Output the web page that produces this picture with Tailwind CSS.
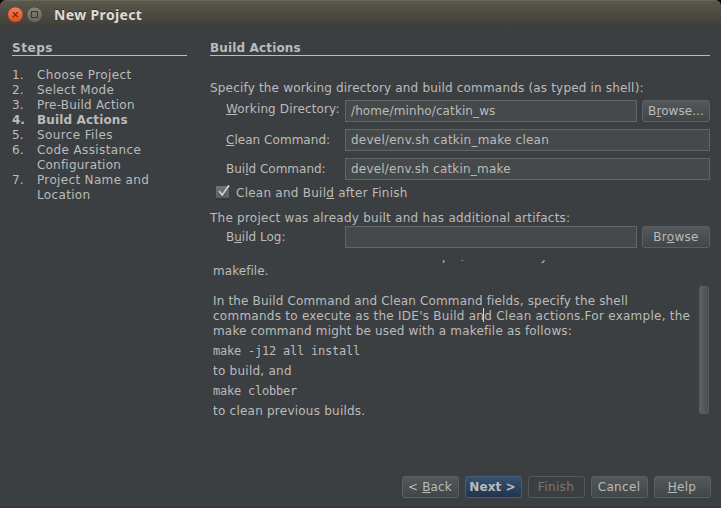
<!DOCTYPE html>
<html lang="en">
<head>
<meta charset="utf-8">
<title>New Project</title>
<script src="https://cdn.jsdelivr.net/npm/@tailwindcss/browser@4"></script>
</head>
<body class="w-[721px] h-[508px] overflow-hidden bg-black">
<div class="w-[721px] h-[508px] flex flex-col rounded-t-[6px] overflow-hidden bg-[#3c3f41] border-b-2 border-[#3b373b] text-[#bbbbbb] text-[12px] leading-[15px] font-['DejaVu_Sans',sans-serif] whitespace-nowrap [&_u]:underline-offset-[1px] [&_u]:decoration-1">

  <header class="h-7 shrink-0 flex items-center bg-linear-to-b from-[#5a574c] to-[#3e3d38] border-t border-[#69665a] pl-[7px]">
    <svg class="w-4 h-4 shrink-0" viewBox="0 0 16 16">
      <defs><linearGradient id="r" x1="0" y1="0" x2="0" y2="1"><stop offset="0" stop-color="#f5825c"/><stop offset="1" stop-color="#df4b16"/></linearGradient></defs>
      <circle cx="8.3" cy="7.700" r="7.700" fill="url(#r)" stroke="#37342d" stroke-width=".5"/>
      <path d="M5.900 5.100l5 5M10.900 5.100l-5 5" stroke="#5a2a18" stroke-width="1.3"/>
    </svg>
    <svg class="w-4 h-4 shrink-0 ml-[3px]" viewBox="0 0 16 16">
      <defs><linearGradient id="g" x1="0" y1="0" x2="0" y2="1"><stop offset="0" stop-color="#89867b"/><stop offset="1" stop-color="#65635b"/></linearGradient></defs>
      <circle cx="8.5" cy="7.700" r="7.700" fill="url(#g)" stroke="#37342d" stroke-width=".5"/>
      <path d="M5.500 4.500h6v6h-6z" fill="none" stroke="#3b3932" stroke-width="1.100"/>
    </svg>
    <h1 class="ml-[12px] font-['Noto_Sans',sans-serif] font-bold text-[14px] leading-5 tracking-[.36px] text-[#dfdbd2] [text-shadow:0_-1px_0_#33312b]">New Project</h1>
  </header>

  <main class="flex pl-3 pt-3 h-[448px] shrink-0">
    <aside class="w-[175px] mr-[23px]">
      <h2 class="font-bold tracking-[.54px] h-4 pt-px border-b border-[#bbbbbb]">Steps</h2>
      <ol class="mt-[12px] grid grid-cols-[25px_1fr]">
        <li class="contents"><span>1.</span><span class="tracking-[.38px]">Choose Project</span></li>
        <li class="contents"><span>2.</span><span class="tracking-[.34px]">Select Mode</span></li>
        <li class="contents"><span>3.</span><span class="tracking-[.2px]">Pre-Build Action</span></li>
        <li class="contents"><span class="font-bold">4.</span><span class="font-bold tracking-[.15px]">Build Actions</span></li>
        <li class="contents"><span>5.</span><span class="tracking-[.38px]">Source Files</span></li>
        <li class="contents"><span>6.</span><span class="tracking-[.38px]">Code Assistance<br><span class="tracking-[.2px]">Configuration</span></span></li>
        <li class="contents"><span>7.</span><span class="tracking-[.34px]">Project Name and<br>Location</span></li>
      </ol>
    </aside>

    <section class="w-[500px]">
      <h2 class="font-bold tracking-[.15px] h-4 pt-px border-b border-[#bbbbbb]">Build Actions</h2>
      <p class="mt-[25px] tracking-[.18px]">Specify the working directory and build commands (as typed in shell):</p>

      <div class="mt-1 flex h-[22px]">
        <label class="w-[135px] pl-4 pt-[2px] tracking-[.13px]"><u>W</u>orking Directory:</label>
        <div class="w-[292px] bg-[#45494a] border border-[#646464] pl-[5px] pt-[3px] tracking-[.1px]">/home/minho/catkin_ws</div>
        <button class="ml-[5px] w-[68px] rounded-[3px] border border-[#5b5f61] bg-linear-to-b from-[#53585a] to-[#414648] tracking-[.07px]">B<u>r</u>owse...</button>
      </div>
      <div class="mt-[7px] flex h-[22px]">
        <label class="w-[135px] pl-4 pt-1 tracking-[.04px]"><u>C</u>lean Command:</label>
        <div class="w-[365px] bg-[#45494a] border border-[#646464] pl-[5px] pt-[3px] tracking-[.23px]">devel/env.sh catkin_make clean</div>
      </div>
      <div class="mt-[7px] flex h-[22px]">
        <label class="w-[135px] pl-4 pt-1">Bui<u>l</u>d Command:</label>
        <div class="w-[365px] bg-[#45494a] border border-[#646464] pl-[5px] pt-[3px] tracking-[.2px]">devel/env.sh catkin_make</div>
      </div>

      <label class="mt-[5px] flex pl-[5px] h-[15px]">
        <svg class="w-[17px] h-[15px] shrink-0" viewBox="0 0 17 15">
          <defs><linearGradient id="c" x1="0" y1="0" x2="0" y2="1"><stop offset="0" stop-color="#737373"/><stop offset="1" stop-color="#5c5c5c"/></linearGradient></defs>
          <rect x="1" y="1" width="13" height="12.500" rx="1" fill="url(#c)"/>
          <path d="M1 14h13" stroke="#292b2c"/>
          <path d="M4 7.200l3.200 4L14 1.500" fill="none" stroke="#333" stroke-width="2"/>
          <path d="M4 6.200l3.200 4L14 .5" fill="none" stroke="#cccccc" stroke-width="2"/>
        </svg>
        <span class="ml-[4px] mt-px tracking-[.25px]">Clean and Buil<u>d</u> after Finish</span>
      </label>

      <p class="mt-[11px] tracking-[.24px]">The project was already built and has additional artifacts:</p>
      <div class="flex h-[22px]">
        <label class="w-[135px] pl-4 pt-1">B<u>u</u>ild Log:</label>
        <div class="w-[292px] bg-[#45494a] border border-[#646464]"></div>
        <button class="ml-[5px] w-[68px] rounded-[3px] border border-[#5b5f61] bg-linear-to-b from-[#53585a] to-[#414648] tracking-[.33px]">Br<u>o</u>wse</button>
      </div>

      <div class="mt-[12px] h-[160px] flex overflow-hidden">
        <article class="w-[489px] pl-[3px] -mt-[11px] h-[170px] [clip-path:inset(11px_0_0_0)]">
          <p class="pl-[195px] tracking-[.15px]">example, the directory that contains the</p>
          <p class="tracking-[.06px]">makefile.</p>
          <p class="mt-[15px] tracking-[.155px]">In the Build Command and Clean Command fields, specify the shell</p>
          <p class="tracking-[.255px]">commands to execute as the IDE's Build an<i class="inline-block w-px h-[14px] -ml-px bg-[#dddddd] align-[2px] -my-1"></i>d Clean actions.For example, the</p>
          <p class="tracking-[.18px]">make command might be used with a makefile as follows:</p>
          <pre class="mt-[5px] font-['DejaVu_Sans_Mono',monospace] tracking-[-.22px]">make -j12 all install</pre>
          <p class="mt-[5px] tracking-[.25px]">to build, and</p>
          <pre class="mt-[5px] font-['DejaVu_Sans_Mono',monospace] tracking-[-.22px]">make clobber</pre>
          <p class="mt-[5px] tracking-[.23px]">to clean previous builds.</p>
        </article>
        <div class="mt-[26px] w-[10px] h-[128px] rounded-[2px] border border-[#5c5c5c] bg-linear-to-r from-[#606060] to-[#4f4e4e]"></div>
      </div>
    </section>
  </main>

  <footer class="flex justify-end gap-[6px] pr-[10px] h-[22px] shrink-0">
    <button class="w-[57px] rounded-[3px] border border-[#5b5f61] bg-linear-to-b from-[#53585a] to-[#414648] tracking-[.15px] pr-px">&lt; <u>B</u>ack</button>
    <button class="w-[57px] rounded-[3px] border border-[#4c5d72] bg-linear-to-b from-[#365274] to-[#22344d] font-bold tracking-[.1px] pr-[2px]">Next &gt;</button>
    <button class="w-[57px] rounded-[3px] border border-[#55585a] tracking-[.4px] text-[#777777] pr-px">Finish</button>
    <button class="w-[57px] rounded-[3px] border border-[#5b5f61] bg-linear-to-b from-[#53585a] to-[#414648] tracking-[.33px] pr-px">Cancel</button>
    <button class="w-[57px] rounded-[3px] border border-[#5b5f61] bg-linear-to-b from-[#53585a] to-[#414648] tracking-[.27px] pr-px"><u>H</u>elp</button>
  </footer>
</div>
</body>
</html>
